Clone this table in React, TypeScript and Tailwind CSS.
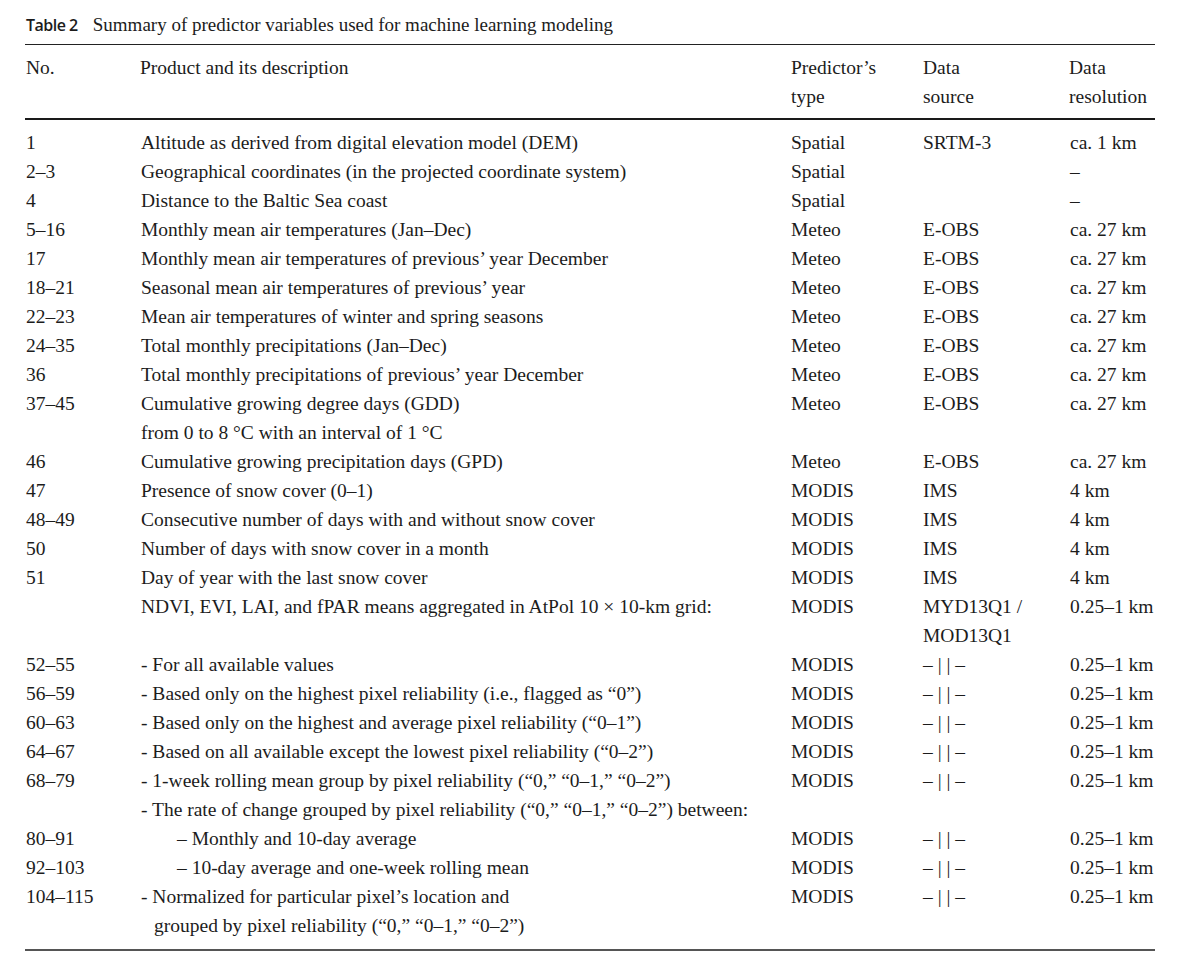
type Row = {
  no?: string;
  desc: React.ReactNode;
  indent?: string;
  type?: string;
  source?: string;
  res?: string;
};

const rows: Row[] = [
  { no: "1", desc: "Altitude as derived from digital elevation model (DEM)", type: "Spatial", source: "SRTM-3", res: "ca. 1 km" },
  { no: "2–3", desc: "Geographical coordinates (in the projected coordinate system)", type: "Spatial", res: "–" },
  { no: "4", desc: "Distance to the Baltic Sea coast", type: "Spatial", res: "–" },
  { no: "5–16", desc: "Monthly mean air temperatures (Jan–Dec)", type: "Meteo", source: "E-OBS", res: "ca. 27 km" },
  { no: "17", desc: "Monthly mean air temperatures of previous’ year December", type: "Meteo", source: "E-OBS", res: "ca. 27 km" },
  { no: "18–21", desc: "Seasonal mean air temperatures of previous’ year", type: "Meteo", source: "E-OBS", res: "ca. 27 km" },
  { no: "22–23", desc: "Mean air temperatures of winter and spring seasons", type: "Meteo", source: "E-OBS", res: "ca. 27 km" },
  { no: "24–35", desc: "Total monthly precipitations (Jan–Dec)", type: "Meteo", source: "E-OBS", res: "ca. 27 km" },
  { no: "36", desc: "Total monthly precipitations of previous’ year December", type: "Meteo", source: "E-OBS", res: "ca. 27 km" },
  { no: "37–45", desc: "Cumulative growing degree days (GDD)", type: "Meteo", source: "E-OBS", res: "ca. 27 km" },
  { desc: "from 0 to 8 °C with an interval of 1 °C" },
  { no: "46", desc: "Cumulative growing precipitation days (GPD)", type: "Meteo", source: "E-OBS", res: "ca. 27 km" },
  { no: "47", desc: "Presence of snow cover (0–1)", type: "MODIS", source: "IMS", res: "4 km" },
  { no: "48–49", desc: "Consecutive number of days with and without snow cover", type: "MODIS", source: "IMS", res: "4 km" },
  { no: "50", desc: "Number of days with snow cover in a month", type: "MODIS", source: "IMS", res: "4 km" },
  { no: "51", desc: "Day of year with the last snow cover", type: "MODIS", source: "IMS", res: "4 km" },
  { desc: "NDVI, EVI, LAI, and fPAR means aggregated in AtPol 10 × 10-km grid:", type: "MODIS", source: "MYD13Q1 /", res: "0.25–1 km" },
  { desc: "", source: "MOD13Q1" },
  { no: "52–55", desc: "- For all available values", type: "MODIS", source: "– | | –", res: "0.25–1 km" },
  { no: "56–59", desc: "- Based only on the highest pixel reliability (i.e., flagged as “0”)", type: "MODIS", source: "– | | –", res: "0.25–1 km" },
  { no: "60–63", desc: "- Based only on the highest and average pixel reliability (“0–1”)", type: "MODIS", source: "– | | –", res: "0.25–1 km" },
  { no: "64–67", desc: "- Based on all available except the lowest pixel reliability (“0–2”)", type: "MODIS", source: "– | | –", res: "0.25–1 km" },
  { no: "68–79", desc: "- 1-week rolling mean group by pixel reliability (“0,” “0–1,” “0–2”)", type: "MODIS", source: "– | | –", res: "0.25–1 km" },
  { desc: "- The rate of change grouped by pixel reliability (“0,” “0–1,” “0–2”) between:" },
  { no: "80–91", desc: "– Monthly and 10-day average", indent: "pl-[37px]", type: "MODIS", source: "– | | –", res: "0.25–1 km" },
  { no: "92–103", desc: "– 10-day average and one-week rolling mean", indent: "pl-[37px]", type: "MODIS", source: "– | | –", res: "0.25–1 km" },
  { no: "104–115", desc: "- Normalized for particular pixel’s location and", type: "MODIS", source: "– | | –", res: "0.25–1 km" },
  { desc: "grouped by pixel reliability (“0,” “0–1,” “0–2”)", indent: "pl-[14px]" },
];

export default function App() {
  return (
    <div className="min-h-screen bg-white text-[#1c1c1c] font-['Liberation_Serif',serif] text-[19.5px]">
      <div className="ml-[25px] w-[1130px] pt-[11px]">
        <div className="flex items-baseline h-[22px] pl-[1px] mb-[11px]">
          <span className="font-['Open_Sans',sans-serif] font-semibold text-[16px] tracking-[-0.5px]">Table 2</span>
          <span className="ml-[15px] text-[19px]">Summary of predictor variables used for machine learning modeling</span>
        </div>
        <div className="border-t border-[#222]" />
        <div className="grid grid-cols-[115px_651px_132px_146px_86px] leading-[29px] pt-[8px] pb-[7px]">
          <div className="pl-[1px]">No.</div>
          <div>Product and its description</div>
          <div>Predictor’s<br />type</div>
          <div>Data<br />source</div>
          <div>Data<br />resolution</div>
        </div>
        <div className="border-t-2 border-[#1a1a1a]" />
        <div className="grid grid-cols-[115px_651px_132px_146px_86px] leading-[29px] pt-[8px] pb-[9px]">
          {rows.map((r, i) => (
            <div key={i} className="contents">
              <div className="pl-[1px] h-[29px]">{r.no}</div>
              <div className={`h-[29px] whitespace-nowrap ${r.indent ?? "pl-[1px]"}`}>{r.desc}</div>
              <div className="h-[29px]">{r.type}</div>
              <div className="h-[29px]">{r.source}</div>
              <div className="h-[29px] pl-[1px] whitespace-nowrap">{r.res}</div>
            </div>
          ))}
        </div>
        <div className="border-t-2 border-[#555]" />
      </div>
    </div>
  );
}
